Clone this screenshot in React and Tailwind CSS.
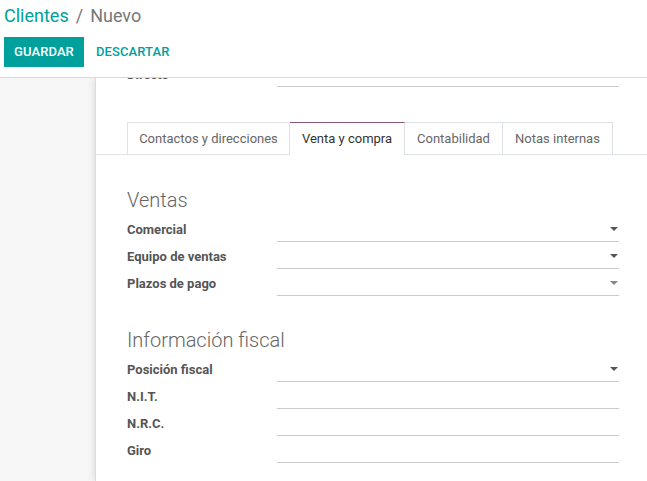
import React from 'react';

const font = { fontFamily: 'Roboto, "Noto Sans", sans-serif' };

function Caret({ light }) {
  return (
    <span
      className={
        'absolute right-[1px] top-[12px] w-0 h-0 border-l-[4px] border-r-[4px] border-t-[4px] border-l-transparent border-r-transparent ' +
        (light ? 'border-t-[#888]' : 'border-t-[#555]')
      }
    />
  );
}

function Field({ label, select, light }) {
  return (
    <div className="flex h-[27px] items-stretch">
      <div className="w-[150px] text-[13px] font-bold text-[#555] leading-[27px] pt-[1px]">{label}</div>
      <div className="relative flex-1 border-b border-[#cccccc]">
        {select && <Caret light={light} />}
      </div>
    </div>
  );
}

const tabs = [
  { label: 'Contactos y direcciones', w: 'w-[163px]' },
  { label: 'Venta y compra', w: 'w-[115px]' },
  { label: 'Contabilidad', w: 'w-[98px]' },
  { label: 'Notas internas', w: 'w-[110px]' },
];

export default function App() {
  return (
    <div className="w-[647px] h-[481px] overflow-hidden bg-white flex flex-col" style={font}>
      <div className="h-[78px] shrink-0 border-b border-[#d9d9d9] px-[4px] bg-white">
        <div className="pt-[3px] h-[33px] text-[18px] leading-[26px]">
          <span className="text-[#00a09d]">Clientes</span>
          <span className="text-[#777] mx-[7px]">/</span>
          <span className="text-[#777]">Nuevo</span>
        </div>
        <div className="flex items-center gap-[12px] mt-[4px]">
          <button className="h-[30px] px-[10px] bg-[#00a09d] text-white text-[13px] font-medium tracking-[0.1px]">GUARDAR</button>
          <button className="h-[30px] px-0 text-[#00a09d] text-[13px] font-medium tracking-[0.1px]">DESCARTAR</button>
        </div>
      </div>

      <div className="flex flex-1 overflow-hidden bg-[#f7f7f7]">
        <div className="w-[95px] shrink-0" />
        <div className="flex-1 bg-white shadow-[0_0_8px_rgba(0,0,0,0.15)] border-l border-[#dcdcdc]">
          <div className="-mt-[18px]">
            <div className="pl-[31px] pr-[28px]">
              <Field label="Directo" />
            </div>

            <div className="mt-[35px] border-b border-[#dee2e6] pl-[31px] flex h-[33px]">
              {tabs.map((t, i) => (
                <div
                  key={t.label}
                  className={
                    t.w +
                    ' text-center text-[13px] leading-[31px] border-t border-r -mb-[1px] ' +
                    (i === 0 ? 'border-l ' : '') +
                    (i === 1
                      ? 'border-t-[#875a7b] border-r-[#dee2e6] bg-white text-[#333] h-[33px]'
                      : 'border-[#dee2e6] text-[#666] h-[33px] border-b border-b-[#dee2e6]')
                  }
                >
                  {t.label}
                </div>
              ))}
            </div>

            <div className="pl-[31px] pr-[28px]">
              <div className="mt-[33px] text-[20px] leading-[24px] text-[#666] font-light">Ventas</div>
              <div className="mt-[3px]">
                <Field label="Comercial" select />
                <Field label="Equipo de ventas" select />
                <Field label="Plazos de pago" select light />
              </div>

              <div className="mt-[32px] text-[20px] leading-[24px] text-[#666] font-light">Información fiscal</div>
              <div className="mt-[3px]">
                <Field label="Posición fiscal" select />
                <Field label="N.I.T." />
                <Field label="N.R.C." />
                <Field label="Giro" />
              </div>
            </div>
          </div>
        </div>
      </div>
    </div>
  );
}
